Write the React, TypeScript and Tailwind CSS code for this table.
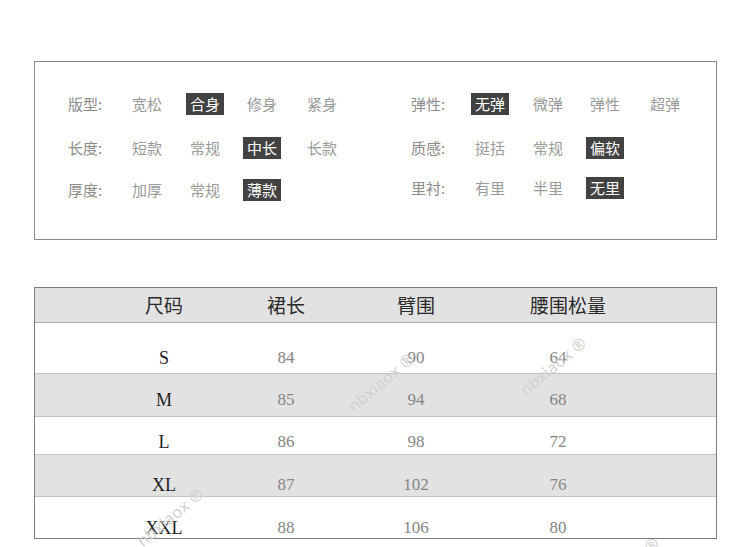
import React from "react";

type Opt = { t: string; on?: boolean };
type Row = { label: string; opts: Opt[] };

const left: Row[] = [
  { label: "版型:", opts: [{ t: "宽松" }, { t: "合身", on: true }, { t: "修身" }, { t: "紧身" }] },
  { label: "长度:", opts: [{ t: "短款" }, { t: "常规" }, { t: "中长", on: true }, { t: "长款" }] },
  { label: "厚度:", opts: [{ t: "加厚" }, { t: "常规" }, { t: "薄款", on: true }] },
];
const right: Row[] = [
  { label: "弹性:", opts: [{ t: "无弹", on: true }, { t: "微弹" }, { t: "弹性" }, { t: "超弹" }] },
  { label: "质感:", opts: [{ t: "挺括" }, { t: "常规" }, { t: "偏软", on: true }] },
  { label: "里衬:", opts: [{ t: "有里" }, { t: "半里" }, { t: "无里", on: true }] },
];

const colW = ["w-[64px]", "w-[58px]", "w-[57px]", "w-[60px]"];

function AttrRow({ row }: { row: Row }) {
  return (
    <div className="flex h-[22px] items-center">
      <div className="w-[64px] text-[#8c8c8c]">{row.label}</div>
      {row.opts.map((o, i) => (
        <div key={i} className={`${colW[i + 1] ?? "w-[60px]"} flex`}>
          {o.on ? (
            <span className="-ml-[4px] h-[22px] bg-[#424242] px-[4px] leading-[22px] text-white">{o.t}</span>
          ) : (
            <span className="leading-[22px] text-[#9a9a9a]">{o.t}</span>
          )}
        </div>
      ))}
    </div>
  );
}

const sizes = [
  { s: "S", a: "84", b: "90", c: "64", gray: false, h: "h-[51px]", pt: "pt-[25px]" },
  { s: "M", a: "85", b: "94", c: "68", gray: true, h: "h-[43px]", pt: "pt-[16px]" },
  { s: "L", a: "86", b: "98", c: "72", gray: false, h: "h-[38px]", pt: "pt-[15px]" },
  { s: "XL", a: "87", b: "102", c: "76", gray: true, h: "h-[42px]", pt: "pt-[20px]" },
  { s: "XXL", a: "88", b: "106", c: "80", gray: false, h: "h-[41px]", pt: "pt-[21px]" },
];

function Watermark({ x, y }: { x: number; y: number }) {
  return (
    <div
      className="pointer-events-none absolute text-[16px] tracking-[0.5px] whitespace-nowrap text-[#cfcfcf]"
      style={{ left: x, top: y, transform: "translate(-50%,-50%) rotate(-40deg)", fontFamily: "'Open Sans', sans-serif" }}
    >
      nbxiaox ®
    </div>
  );
}

export default function App() {
  return (
    <div
      className="relative h-[547px] w-[750px] overflow-hidden bg-white pt-[61px]"
      style={{ fontFamily: "'Noto Sans CJK SC', 'Noto Sans', sans-serif" }}
    >
      {/* attribute box */}
      <div className="ml-[34px] h-[179px] w-[683px] border border-[#8a8a8a] text-[15px]">
        <div className="flex pt-[31px] pl-[33px]">
          <div className="w-[343px]">
            <div className="flex flex-col">
              <AttrRow row={left[0]} />
              <div className="mt-[22px]"><AttrRow row={left[1]} /></div>
              <div className="mt-[20px]"><AttrRow row={left[2]} /></div>
            </div>
          </div>
          <div className="flex flex-col">
            <AttrRow row={right[0]} />
            <div className="mt-[22px]"><AttrRow row={right[1]} /></div>
            <div className="mt-[18px]"><AttrRow row={right[2]} /></div>
          </div>
        </div>
      </div>

      {/* size table */}
      <div className="mt-[47px] ml-[34px] w-[683px] border border-[#7c7c7c]">
        <div className="flex h-[35px] items-center border-b border-[#ababab] bg-[#e3e2e2] text-[19px] leading-[28px] text-[#2a2a2a]">
          <div className="ml-[89px] w-[80px] text-center">尺码</div>
          <div className="ml-[42px] w-[80px] text-center">裙长</div>
          <div className="ml-[50px] w-[80px] text-center">臂围</div>
          <div className="ml-[72px] w-[80px] text-center whitespace-nowrap">腰围松量</div>
        </div>
        {sizes.map((r, i) => (
          <div
            key={r.s}
            className={`${r.h} ${r.pt} flex ${i < sizes.length - 1 ? "border-b border-[#c4c4c4]" : ""} ${r.gray ? "bg-[#e3e2e2]" : "bg-white"}`}
            style={{ fontFamily: "'Liberation Serif', serif" }}
          >
            <div className="ml-[89px] w-[80px] text-center text-[18px] leading-[20px] text-[#1e1e1e]">{r.s}</div>
            <div className="ml-[42px] w-[80px] text-center text-[17px] leading-[20px] text-[#858585]">{r.a}</div>
            <div className="ml-[50px] w-[80px] text-center text-[17px] leading-[20px] text-[#858585]">{r.b}</div>
            <div className="ml-[62px] w-[80px] text-center text-[17px] leading-[20px] text-[#858585]">{r.c}</div>
          </div>
        ))}
      </div>

      <Watermark x={381} y={382} />
      <Watermark x={553} y={366} />
      <Watermark x={170} y={517} />
      <Watermark x={626} y={566} />
    </div>
  );
}
